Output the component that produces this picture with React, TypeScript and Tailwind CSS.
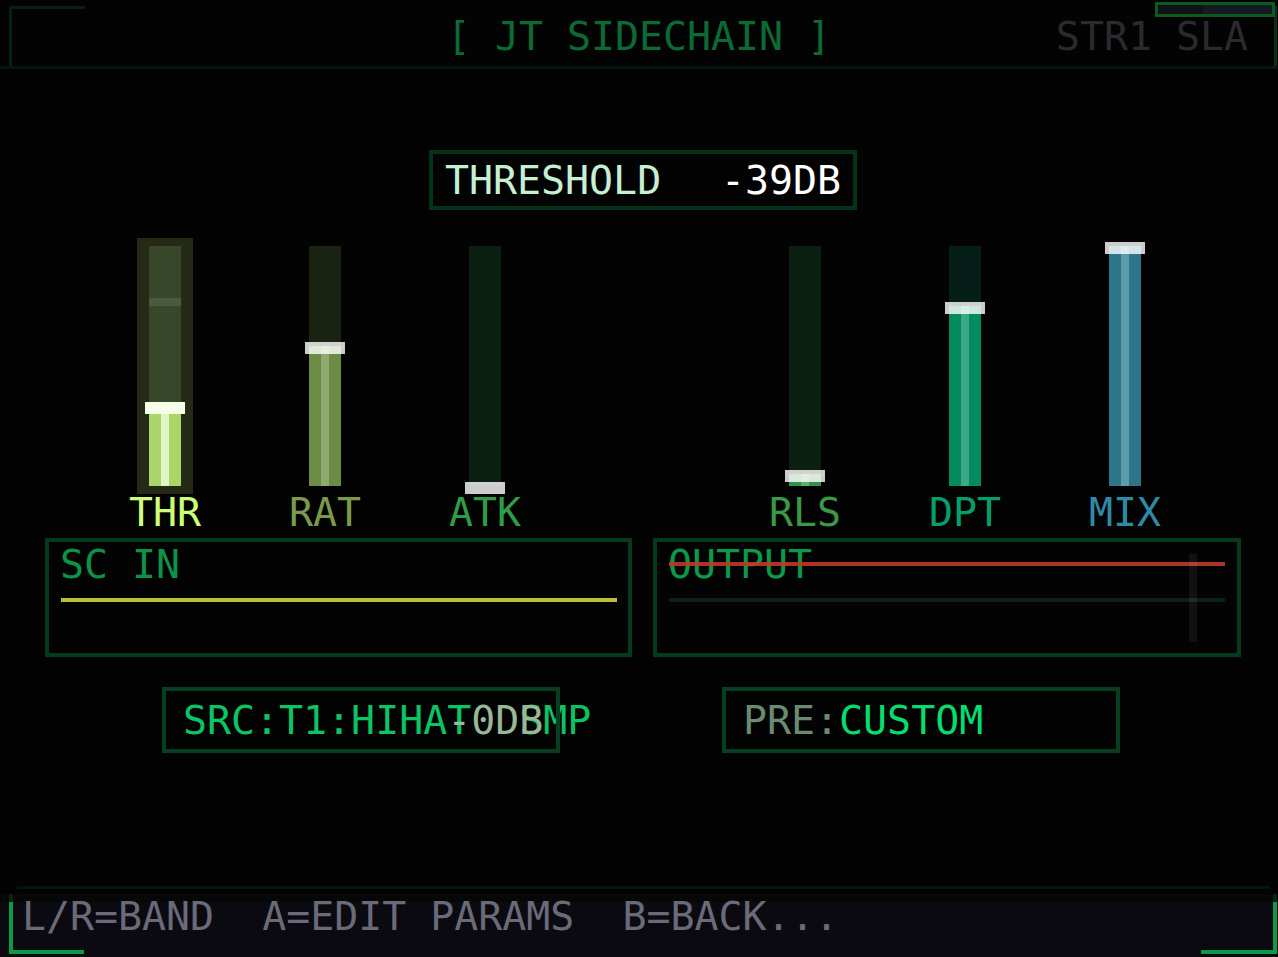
import React from "react";

type Slider = {
  label: string;
  value: number;
  labelColor: string;
  track: string;
  fill: string;
  stripe: string;
  selected?: boolean;
};

const sliders: (Slider | null)[] = [
  { label: "THR", value: 80 / 240, labelColor: "text-[#ccff77]", track: "bg-[#38462a]", fill: "bg-[#a9d66a]", stripe: "bg-[#e0f4c6]", selected: true },
  { label: "RAT", value: 140 / 240, labelColor: "text-[#7b9b4b]", track: "bg-[#1b2313]", fill: "bg-[#6c8b45]", stripe: "bg-[#91a873]" },
  { label: "ATK", value: 0, labelColor: "text-[#2e9d48]", track: "bg-[#0c2012]", fill: "bg-[#2e9d48]", stripe: "bg-[#5ab070]" },
  null,
  { label: "RLS", value: 12 / 240, labelColor: "text-[#3a9846]", track: "bg-[#0c2012]", fill: "bg-[#3a8f46]", stripe: "bg-[#6aa878]" },
  { label: "DPT", value: 180 / 240, labelColor: "text-[#04a06c]", track: "bg-[#051e18]", fill: "bg-[#038a5e]", stripe: "bg-[#3aa889]" },
  { label: "MIX", value: 1, labelColor: "text-[#2f8aa6]", track: "bg-[#0a1e22]", fill: "bg-[#2d768a]", stripe: "bg-[#5e9bab]" },
];

function SliderCol({ s }: { s: Slider | null }) {
  if (!s) return <div className="w-[160px]" />;
  const fillH = s.value * 240;
  return (
    <div className="w-[160px] flex flex-col items-center">
      <div className={`w-[56px] h-[256px] px-[12px] py-[8px] ${s.selected ? "bg-[#252a17]" : ""}`}>
        <div className={`relative w-[32px] h-[240px] ${s.track}`}>
          {s.selected && <div className="absolute left-0 right-0 top-[52px] h-[8px] bg-[#4b5a3f]" />}
          <div className={`absolute left-0 right-0 bottom-0 ${s.fill}`} style={{ height: fillH }}>
            <div className={`absolute top-0 bottom-0 left-[12px] w-[8px] ${s.stripe}`} />
          </div>
          <div
            className={`absolute left-[-4px] w-[40px] h-[12px] ${s.selected ? "bg-[#f6fde8]" : "bg-white/80"}`}
            style={{ top: 240 - fillH - 4 }}
          />
        </div>
      </div>
      <div className={`mt-[-1px] leading-[39px] ${s.labelColor}`}>{s.label}</div>
    </div>
  );
}

export default function App() {
  return (
    <div className="w-[1278px] h-[957px] bg-[#030303] overflow-hidden flex flex-col font-['DejaVu_Sans_Mono',monospace] text-[39.9px] leading-[39px]">
      {/* Header */}
      <div className="relative h-[69px] shrink-0 border-b-[3px] border-[#03180b] grid grid-cols-[1fr_auto_1fr] pt-[17px]">
        <div />
        <div className="text-[#0b6b35] whitespace-pre">[ JT SIDECHAIN ]</div>
        <div className="text-right pr-[30px] text-[#2a2a2f] whitespace-pre">STR1 SLA</div>
        <div className="absolute left-[9px] top-[6px] w-[76px] h-[60px] border-l-[3px] border-t-[3px] border-[#03220f]" />
        <div className="absolute right-[1px] top-[6px] w-[3px] h-[60px] bg-[#05301a]" />
        <div className="absolute left-[1155px] top-[2px] w-[120px] h-[15px] border-[3px] border-[#0d5a20] bg-[#0f1117] flex">
          <div className="w-[45px]" />
          <div className="flex-1 bg-[#151a20]" />
        </div>
      </div>

      {/* Threshold readout */}
      <div className="mt-[81px] flex justify-center">
        <div className="ml-[8px] w-[428px] h-[60px] border-[4px] border-[#04331a] flex items-center justify-between px-[12px] whitespace-pre">
          <span className="text-[#c6f0d4]">THRESHOLD</span>
          <span className="text-white">-39DB</span>
        </div>
      </div>

      {/* Sliders */}
      <div className="mt-[28px] pl-[85px] flex">
        {sliders.map((s, i) => (
          <SliderCol key={i} s={s} />
        ))}
      </div>

      {/* Meters */}
      <div className="mt-[6px] pl-[45px] flex gap-[21px]">
        <div className="w-[587px] h-[119px] border-[4px] border-[#073a1d] pt-[3px] pl-[12px] pr-[11px]">
          <div className="ml-[-1px] text-[#0b9448] whitespace-pre">SC IN</div>
          <div className="mt-[14px] h-[4px] bg-[#bcbc3c]" />
        </div>
        <div className="relative w-[588px] h-[119px] border-[4px] border-[#073a1d] pt-[3px] px-[12px]">
          <div className="ml-[-1px] text-[#0a9a48] whitespace-pre">OUTPUT</div>
          <div className="mt-[14px] h-[4px] bg-[#0a2214]" />
          <div className="absolute left-[12px] right-[12px] top-[20px] h-[4px] bg-[#c0392b]/90" />
          <div className="absolute left-[532px] top-[12px] w-[8px] h-[88px] bg-white/[0.06]" />
        </div>
      </div>

      {/* Source / preset */}
      <div className="mt-[30px] pl-[162px] flex gap-[162px]">
        <div className="relative w-[398px] h-[66px] flex items-center pl-[21px] whitespace-pre">
          <span className="relative text-[#0bc463]">
            {"SRC:T1:HIHAT  SMP"}
            <span className="absolute left-[11ch] top-0 text-[#98b898]">-0DB</span>
          </span>
          <div className="absolute inset-0 border-[4px] border-[#053f1f]" />
        </div>
        <div className="w-[398px] h-[66px] border-[4px] border-[#053f1f] flex items-center pl-[17px] whitespace-pre">
          <span className="text-[#6a8a72]">PRE:</span>
          <span className="text-[#05dd6d]">CUSTOM</span>
        </div>
      </div>

      {/* Footer */}
      <div className="mt-auto relative h-[71px] shrink-0">
        <div className="ml-[17px] mr-[8px] h-[3px] bg-[#03150a]" />
        <div className="relative mt-[5px] h-[63px] bg-[linear-gradient(to_bottom,#050807_0px,#050807_8px,#0a0a10_8px)] pt-[3px] pl-[22px] text-[#6a6a7a] whitespace-pre">
          L/R=BAND  A=EDIT PARAMS  B=BACK...
          <div className="absolute left-[9px] top-0 w-[4px] h-[8px] bg-[#03260f]" />
          <div className="absolute left-[9px] top-[8px] w-[75px] h-[52px] border-l-[4px] border-b-[4px] border-[#0a9a48]" />
          <div className="absolute right-[1px] top-0 w-[4px] h-[8px] bg-[#03260f]" />
          <div className="absolute right-[1px] top-[8px] w-[76px] h-[52px] border-r-[4px] border-b-[4px] border-[#0a9a48]" />
        </div>
      </div>
    </div>
  );
}
